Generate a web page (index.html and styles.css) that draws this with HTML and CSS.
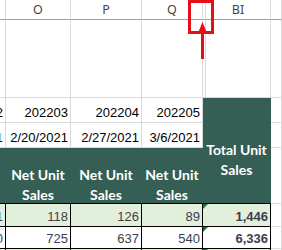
FILE: index.html
```html
<!DOCTYPE html>
<html>
<head>
<meta charset="utf-8">
<link rel="stylesheet" href="styles.css">
</head>
<body>
<div class="sheet">
  <!-- row 1: column headers -->
  <div class="c h"></div>
  <div class="c h">O</div>
  <div class="c h">P</div>
  <div class="c h">Q</div>
  <div class="c h"></div>
  <div class="c h">BI</div>
  <div class="c h"></div>
  <!-- row 2: tall empty row -->
  <div class="c"></div>
  <div class="c"></div>
  <div class="c"></div>
  <div class="c"></div>
  <div class="c"></div>
  <div class="c"></div>
  <div class="c"></div>
  <!-- row 3 -->
  <div class="c">2</div>
  <div class="c">202203</div>
  <div class="c">202204</div>
  <div class="c">202205</div>
  <div class="c g total"><div class="gt">Total Unit<br>Sales</div></div>
  <div class="c"></div>
  <!-- row 4 -->
  <div class="c navy">1</div>
  <div class="c">2/20/2021</div>
  <div class="c">2/27/2021</div>
  <div class="c">3/6/2021</div>
  <div class="c"></div>
  <!-- row 5: green header -->
  <div class="c g"></div>
  <div class="c g net"><div class="gt">Net Unit<br>Sales</div></div>
  <div class="c g net"><div class="gt">Net Unit<br>Sales</div></div>
  <div class="c g net"><div class="gt">Net Unit<br>Sales</div></div>
  <div class="c"></div>
  <!-- row 6 -->
  <div class="c d lg">1</div>
  <div class="c d lg">118</div>
  <div class="c d lg">126</div>
  <div class="c d lg">89</div>
  <div class="c d lg bi tri"><b>1,446</b></div>
  <div class="c"></div>
  <!-- row 7 -->
  <div class="c d">0</div>
  <div class="c d">725</div>
  <div class="c d">637</div>
  <div class="c d">540</div>
  <div class="c d bi tri"><b>6,336</b></div>
  <div class="c"></div>
  <!-- row 8 -->
  <div class="c d lg"></div>
  <div class="c d lg"></div>
  <div class="c d lg"></div>
  <div class="c d lg"></div>
  <div class="c d lg bi tri"></div>
  <div class="c"></div>

  <div class="redbox"></div>
  <svg class="arrow" width="14" height="40" viewBox="0 0 14 40">
    <polygon points="6.5,0 11,11 2,11" fill="#e3101a"/>
    <rect x="5" y="10" width="3" height="27" fill="#e3101a"/>
  </svg>
</div>
</body>
</html>
```

FILE: styles.css
```css
html, body {
  margin: 0;
  padding: 0;
  background: #fff;
}
body {
  width: 282px;
  height: 250px;
  overflow: hidden;
}
.sheet {
  position: relative;
  height: 250px;
  overflow: hidden;
  display: grid;
  grid-template-columns: 6px 65px 71px 61px 3px 65px 11px;
  grid-template-rows: 20px 78px 25px 25px 56px 23px 22px 1px;
}
.c {
  box-sizing: border-box;
  border-right: 1px solid #d9d9d9;
  border-bottom: 1px solid #d9d9d9;
  font-family: "Liberation Sans", Arial, sans-serif;
  font-size: 13px;
  line-height: 15px;
  color: #000;
  display: flex;
  align-items: flex-end;
  justify-content: flex-end;
  padding: 0 2px 2px 0;
  overflow: hidden;
  white-space: nowrap;
}
.h {
  justify-content: center;
  align-items: center;
  padding: 0;
  font-family: "Noto Sans", sans-serif;
  font-size: 12.5px;
  color: #444;
  border-bottom-color: #a0a0a0;
}
.navy {
  color: #1c1c5a;
}
.g {
  background: #355e54;
  border-right-color: #355e54;
  border-bottom: 1px solid #000;
  color: #fff;
  justify-content: center;
  align-items: flex-start;
  padding: 0;
}
.gt {
  font-family: Lato, "Noto Sans", sans-serif;
  font-weight: 700;
  font-size: 14px;
  line-height: 20px;
  text-align: center;
  color: #fff;
}
.net {
  padding-top: 17px;
  overflow: visible;
}
.total {
  grid-column: span 2;
  grid-row: span 3;
  padding-top: 42px;
}
.d {
  border-right: 1px solid #000;
  border-bottom: 1px solid #000;
  color: #3e3e4e;
  align-items: center;
  padding: 2px 2px 0 0;
}
.lg {
  background: #e2efda;
}
.bi {
  grid-column: span 2;
  position: relative;
}
.tri::before {
  content: "";
  position: absolute;
  left: 0;
  top: 0;
  border-top: 5px solid #1d7335;
  border-right: 5px solid transparent;
}
.redbox {
  position: absolute;
  left: 188px;
  top: 0;
  width: 26px;
  height: 34px;
  box-sizing: border-box;
  border: 3px solid #e3101a;
}
.arrow {
  position: absolute;
  left: 196px;
  top: 22px;
}
```
